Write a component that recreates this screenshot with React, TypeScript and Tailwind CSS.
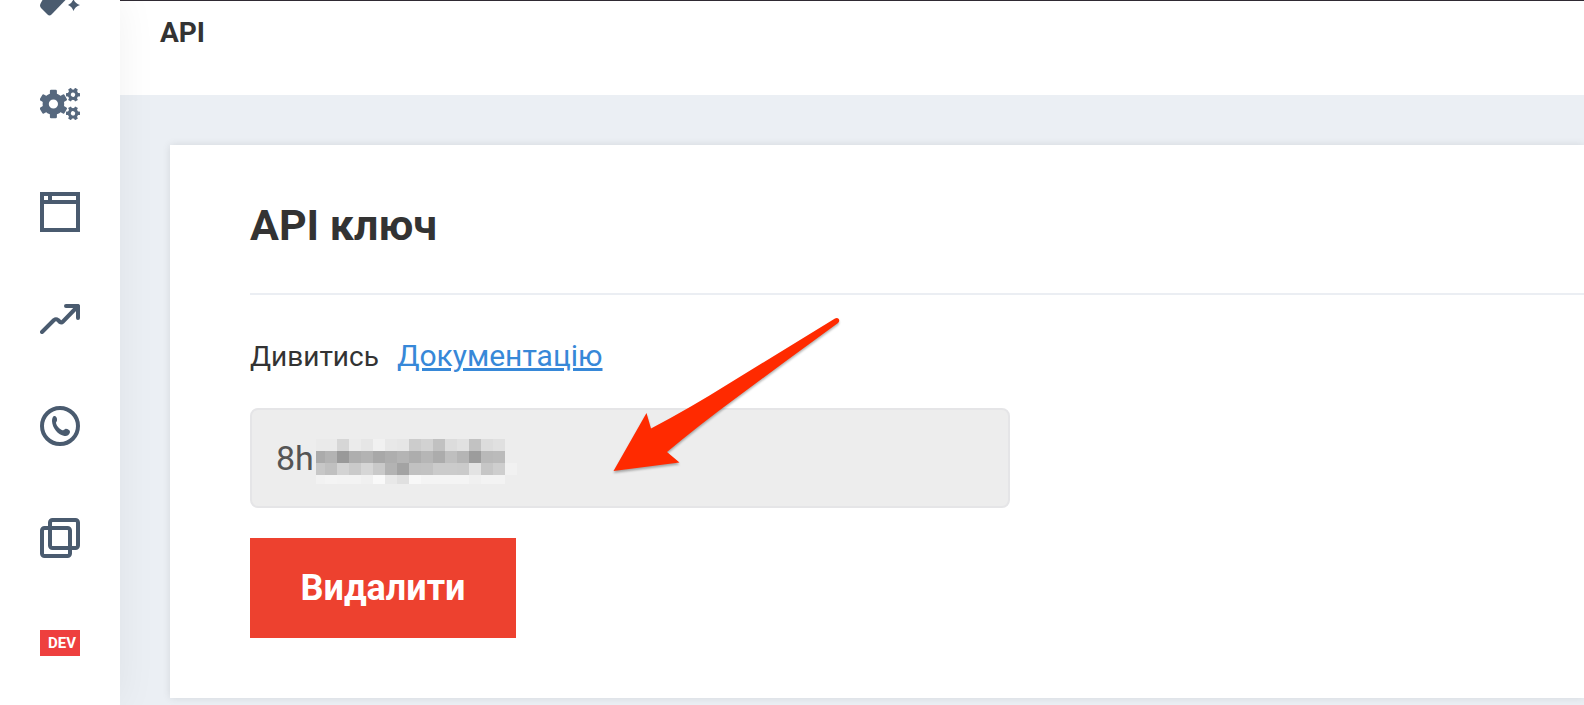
import type { ReactNode } from 'react'

function WandIcon() {
  return (
    <svg width="40" height="16" viewBox="0 0 40 16" fill="currentColor">
      <path d="M2.500 0H25.500L11.500 14.500Q9.500 16.500 7.500 14.500L1 8Q-.8 6 .8 3Z" />
      <path d="M33.500 -1Q35 3.500 40 5Q35 6.500 33.500 11Q32 6.500 28 5Q32 3.500 33.500 -1Z" />
    </svg>
  )
}

type GearProps = { cx: number; cy: number; outer: number; body: number; hole: number; tooth: number; turn: number }

function Gear({ cx, cy, outer, body, hole, tooth, turn }: GearProps) {
  return (
    <g transform={`translate(${cx} ${cy}) rotate(${turn})`}>
      <circle r={(body + hole) / 2} fill="none" stroke="currentColor" strokeWidth={body - hole} />
      {[0, 60, 120, 180, 240, 300].map((angle) => (
        <rect
          key={angle} x={-tooth / 2} y={-outer} width={tooth} height={outer - hole - 1}
          rx={tooth / 6} fill="currentColor" transform={`rotate(${angle})`}
        />
      ))}
    </g>
  )
}

function GearsIcon() {
  return (
    <svg width="40" height="32" viewBox="0 0 40 32" className="text-[#56687e]">
      <Gear cx={13.4} cy={16} outer={14.2} body={10.8} hole={4.6} tooth={7} turn={0} />
      <Gear cx={33} cy={6.7} outer={7} body={5.3} hole={2.2} tooth={3.4} turn={30} />
      <Gear cx={33} cy={25.3} outer={7} body={5.3} hole={2.2} tooth={3.4} turn={30} />
    </svg>
  )
}

function WindowIcon() {
  return (
    <svg width="40" height="40" viewBox="0 0 40 40" fill="none" stroke="currentColor" strokeWidth="4">
      <rect x="2" y="2" width="36" height="36" />
      <path d="M2 10H38M10 2V10" />
    </svg>
  )
}

function TrendIcon() {
  return (
    <svg
      width="40" height="30" viewBox="0 0 40 30" fill="none" stroke="currentColor"
      strokeWidth="4" strokeLinecap="round" strokeLinejoin="round"
    >
      <path d="M2 28L14 16Q16 14.500 18 16L20 18Q21.500 19 23 17.500L38 2M26 2H38V14" />
    </svg>
  )
}

function PhoneIcon() {
  return (
    <svg width="40" height="40" viewBox="0 0 40 40" fill="none" stroke="currentColor" strokeWidth="4">
      <circle cx="20" cy="20" r="18" />
      <path
        fill="currentColor" stroke="none"
        d="M14.500 10C16.200 10 17.500 12.500 17 14.500C16.800 15.500 16 16 16 17C16.500 20 19.500 23 22.500 24.300C23.500 24.500 24 23.300 25.300 22.900C27.300 22.600 30 24.200 30 25.700C29.800 28.500 27 30.300 24.500 30C18 29 12.300 22 12 15C12 12 13 10 14.500 10Z"
      />
    </svg>
  )
}

function CopyIcon() {
  return (
    <svg width="40" height="40" viewBox="0 0 40 40" fill="none" stroke="currentColor" strokeWidth="4">
      <rect x="10" y="2" width="28" height="28" rx="2.500" />
      <rect x="2" y="10" width="28" height="28" rx="2.500" />
    </svg>
  )
}

const items: { href: string; label: string; icon: ReactNode }[] = [
  { href: '#design',   label: 'Дизайн',       icon: <WandIcon /> },
  { href: '#settings', label: 'Налаштування', icon: <GearsIcon /> },
  { href: '#pages',    label: 'Сторінки',     icon: <WindowIcon /> },
  { href: '#stats',    label: 'Статистика',   icon: <TrendIcon /> },
  { href: '#calls',    label: 'Дзвінки',      icon: <PhoneIcon /> },
  { href: '#copies',   label: 'Копії',        icon: <CopyIcon /> },
]

function Sidebar() {
  return (
    <nav className="relative z-10 flex w-[120px] shrink-0 flex-col items-center gap-18 bg-white text-[#4a5b6f] shadow-[0_0_40px_rgba(0,0,0,0.06)]">
      {items.map(({ href, label, icon }) => (
        <a key={href} href={href} aria-label={label} className="block [&>svg]:block">
          {icon}
        </a>
      ))}
      <a
        href="#dev"
        className="flex h-[26px] w-10 items-center justify-end bg-[#ee3f3e] pr-1 font-[Roboto,sans-serif] text-[15px] leading-none font-bold text-white"
      >
        DEV
      </a>
    </nav>
  )
}

// grey levels of the hidden part of the key, one list per row
const mask = [
  ['#eaeaea', '#eaeaea', '#d6d6d6', '#ebebeb', '#e6e6e6', '#f1f1f1', '#e8e8e8', '#e6e6e6', '#cccccc', '#d2d2d2', '#c1c1c1', '#dcdcdc', '#e1e1e1', '#c2c2c2', '#dcdcdc', '#e0e0e0', '#ededed'],
  ['#ababab', '#b3b3b3', '#999999', '#aeaeae', '#b3b3b3', '#a8a8a8', '#aeaeae', '#b4b4b4', '#adadad', '#b6b6b6', '#acacac', '#bfbfbf', '#b5b5b5', '#9c9c9c', '#b9b9b9', '#bbbbbb', '#ededed'],
  ['#c7c7c7', '#c0c0c0', '#d3d3d3', '#cacaca', '#d6d6d6', '#c9c9c9', '#b3b3b3', '#a3a3a3', '#c1c1c1', '#c2c2c2', '#cbcbcb', '#cbcbcb', '#cacaca', '#e3e3e3', '#c6c6c6', '#cecece', '#f1f1f1'],
  ['#f2f2f2', '#f4f4f4', '#f3f3f3', '#f3f3f3', '#f0f0f0', '#f9f9f9', '#e8e8e8', '#e0e0e0', '#f8f8f8', '#f4f4f4', '#f4f4f4', '#f4f4f4', '#f4f4f4', '#f0f0f0', '#f3f3f3', '#f3f3f3', '#ededed'],
]

function KeyMask() {
  return (
    <svg
      width="201" height="45" viewBox="0 0 201 45" shapeRendering="crispEdges"
      className="pointer-events-none absolute top-[31px] left-[66px]" aria-hidden="true"
    >
      {mask.map((row, y) =>
        row.map((fill, x) => (
          <rect key={`${x}-${y}`} x={x * 12 - 3} y={y * 12} width="12" height="12" fill={fill} />
        )),
      )}
    </svg>
  )
}

function Arrow() {
  return (
    <svg
      width="240" height="170" viewBox="0 0 240 170" aria-hidden="true"
      className="pointer-events-none absolute -top-[98px] left-[356px] drop-shadow-[0_2px_1px_rgba(0,0,0,0.3)]"
    >
      <path
        fill="#ff2a00"
        d="M7.500 161L40.500 103L45 118.500Q84 98 123 73.500L229 8.500C232 6.500 235 10 232 13L180 51L130 88Q92 116 61 142L73.500 152.500Z"
      />
    </svg>
  )
}

export default function App() {
  return (
    <div className="flex min-h-screen overflow-hidden bg-[#ebeff4] font-[Roboto,sans-serif] text-[#333]">
      <Sidebar />

      <main className="min-w-0 flex-1">
        <header className="h-[95px] border-t border-[#2f2a33] bg-white px-10 pt-3">
          <h1 className="text-[28px] leading-10 font-bold">API</h1>
        </header>

        <section className="mt-[50px] ml-[50px] bg-white pt-[50px] pb-[60px] pl-20 shadow-[0_0_8px_rgba(0,0,0,0.1)]">
          <h2 className="border-b-2 border-[#ebeef3] pb-[38px] text-[43px] leading-[60px] font-bold">
            API ключ
          </h2>

          <p className="mt-[39px] flex items-baseline gap-[18px] text-[28px] leading-[44px]">
            <label htmlFor="api-key">Дивитись</label>
            <a href="#docs" className="text-[30px] text-[#3788d8] underline decoration-[3px] underline-offset-2">
              Документацію
            </a>
          </p>

          <div className="relative mt-[29px] w-[760px] max-w-full">
            <input
              id="api-key"
              type="text"
              readOnly
              value="8h"
              className="block h-[100px] w-full rounded-lg border-2 border-[#e5e5e7] bg-[#ededed] px-6 text-[34px] text-[#555] outline-none"
            />
            <KeyMask />
            <Arrow />
          </div>

          <button
            type="button"
            className="mt-[30px] block h-[100px] w-[266px] bg-[#ed412f] text-[36px] font-bold text-white"
          >
            Видалити
          </button>
        </section>
      </main>
    </div>
  )
}
